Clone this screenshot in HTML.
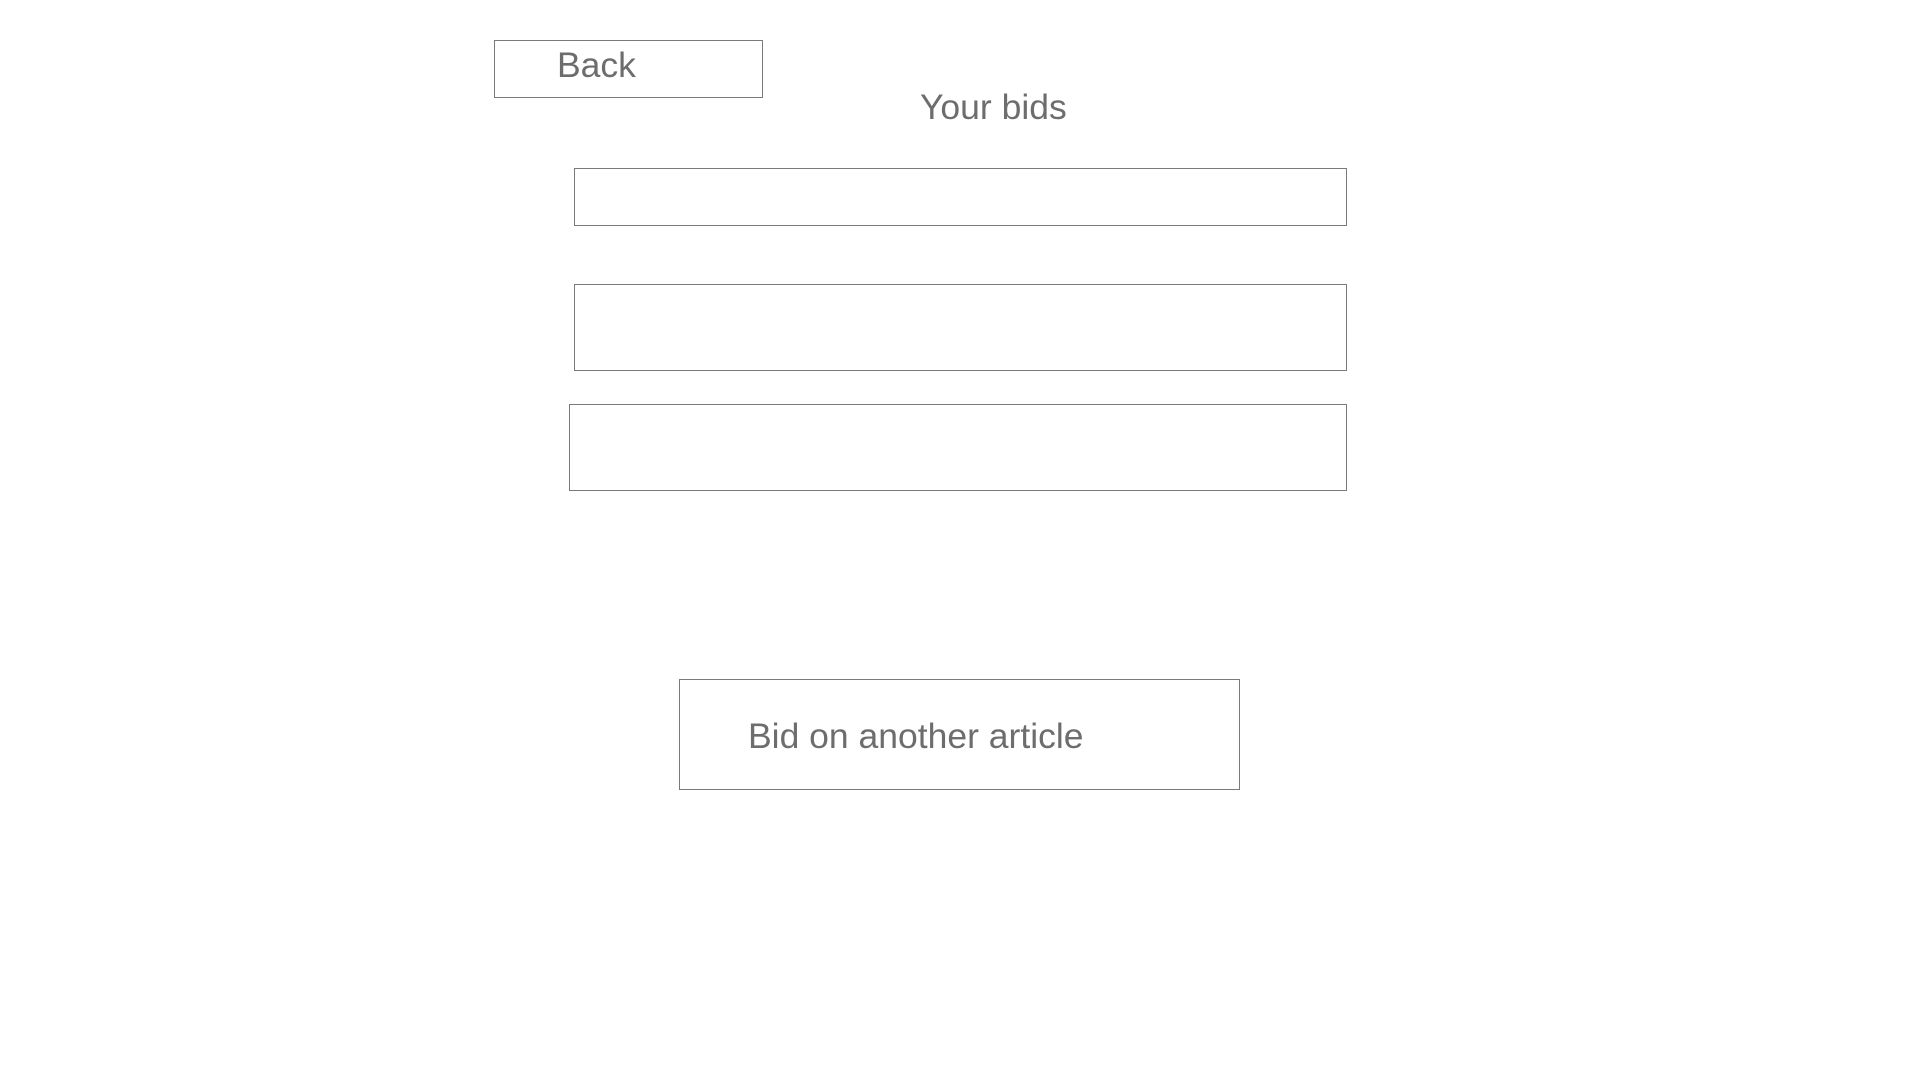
<!DOCTYPE html>
<html><head><style>
body{margin:0;width:1920px;height:1080px;background:#fff;position:relative;font-family:"Liberation Sans",Arial,sans-serif;color:#6d6d6d;overflow:hidden}
.b{position:absolute;border:1.5px solid #7a7a7a;box-sizing:border-box}
.t{position:absolute;font-size:35.5px;line-height:1;white-space:nowrap}
</style></head><body>
<div class="b" style="left:494px;top:40px;width:269px;height:58px"></div>
<div class="t" style="left:557px;top:48px">Back</div>
<div class="t" style="left:920px;top:90px">Your bids</div>
<div class="b" style="left:574px;top:168px;width:773px;height:58px"></div>
<div class="b" style="left:574px;top:284px;width:773px;height:87px"></div>
<div class="b" style="left:569px;top:404px;width:778px;height:87px"></div>
<div class="b" style="left:679px;top:679px;width:561px;height:111px"></div>
<div class="t" style="left:748px;top:719px">Bid on another article</div>
</body></html>
